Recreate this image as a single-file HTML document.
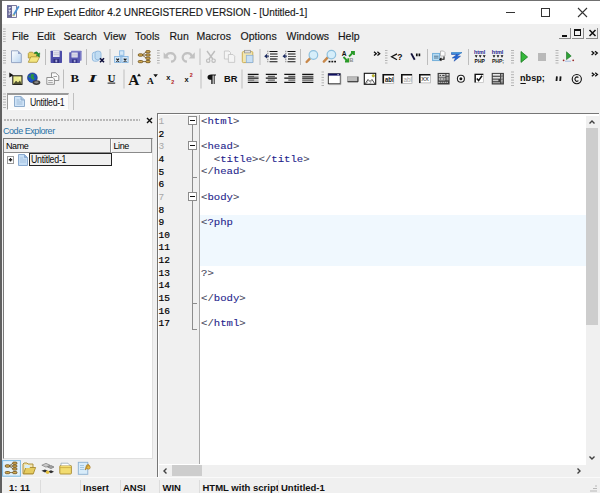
<!DOCTYPE html>
<html><head><meta charset="utf-8">
<style>
*{margin:0;padding:0;box-sizing:border-box}
html,body{width:600px;height:493px;overflow:hidden;background:#f0f0f0;font-family:"Liberation Sans",sans-serif;font-size:11px;color:#000;position:relative}
.a{position:absolute}
svg{position:absolute;overflow:visible}
.t{white-space:nowrap;line-height:12px}
.menu{top:29.5px;font-size:10.5px;color:#161616;-webkit-text-stroke:0.15px #161616}
.grip{width:3px;background:repeating-linear-gradient(to bottom,#b0b0b0 0 1px,transparent 1px 2.6px)}
.sep{width:1px;background:#c4c4c4}
.code{font-family:"Liberation Mono",monospace;font-size:10.65px;color:#24248c;white-space:pre;line-height:12px;transform:scaleY(0.79);transform-origin:0 8.9px;-webkit-text-stroke:0.1px currentColor}
.code b{font-weight:normal;color:#48485c}
.ln{font-family:"Liberation Mono",monospace;font-size:9.5px;font-weight:normal;-webkit-text-stroke:0.2px #000;color:#000;left:158.5px;line-height:12px;margin-top:1.8px}
.ln.g{color:#a8a8a8;font-weight:normal;-webkit-text-stroke:0}
.st{font-size:9.5px;font-weight:bold;top:482px;line-height:12px;white-space:nowrap;color:#111}
</style></head><body>

<!-- ===== TITLE BAR ===== -->
<div class="a" style="left:0;top:0;width:600px;height:24px;background:#fff"></div>
<div class="a" style="left:0;top:0;width:600px;height:1px;background:#707070"></div>
<svg style="left:7px;top:5px" width="13" height="13" viewBox="0 0 13 13">
  <rect x="0.4" y="0.6" width="9.2" height="11.8" fill="#f4f6fc" stroke="#5a5a86" stroke-width="0.8"/>
  <rect x="0.4" y="0.6" width="4.6" height="11.8" fill="#6a6a98"/>
  <path d="M1.6 2.5h2.2M1.6 3.8h1.2M1.6 5.6h2.2M2.7 5.6v1.6M1.6 8.2h2.2M1.6 9.5h1.2" stroke="#e8e8f4" stroke-width="0.9"/>
  <path d="M6.2 10.8 L11.8 1.2" stroke="#4a90d0" stroke-width="1.8"/>
  <path d="M6.2 10.8 L6.8 9.6" stroke="#d0c060" stroke-width="1.8"/>
</svg>
<div class="a t" style="left:24px;top:7px;font-size:10px;color:#1a1a1a;letter-spacing:-0.03px;-webkit-text-stroke:0.15px #1a1a1a">PHP Expert Editor 4.2 UNREGISTERED VERSION - [Untitled-1]</div>
<div class="a" style="left:506px;top:12px;width:8.5px;height:1px;background:#333"></div>
<div class="a" style="left:541px;top:8px;width:9px;height:9px;border:1px solid #333"></div>
<svg style="left:578px;top:8px" width="9" height="9"><path d="M0 0L9 9M9 0L0 9" stroke="#333" stroke-width="1.1"/></svg>

<!-- window left border -->
<div class="a" style="left:0;top:0;width:1.5px;height:493px;background:#606060;z-index:50"></div>

<!-- ===== MENU BAR ===== -->

<div class="a t menu" style="left:12px">File</div>
<div class="a t menu" style="left:37px">Edit</div>
<div class="a t menu" style="left:63.5px">Search</div>
<div class="a t menu" style="left:103.5px">View</div>
<div class="a t menu" style="left:135px">Tools</div>
<div class="a t menu" style="left:169.5px">Run</div>
<div class="a t menu" style="left:196.5px">Macros</div>
<div class="a t menu" style="left:240.5px">Options</div>
<div class="a t menu" style="left:286.5px">Windows</div>
<div class="a t menu" style="left:338px">Help</div>
<!-- MDI buttons -->
<div class="a" style="left:559px;top:28px;width:12px;height:11px;border-right:1px solid #8a8a8a;border-bottom:1px solid #8a8a8a"></div>
<div class="a" style="left:562px;top:35px;width:5px;height:2px;background:#111"></div>
<div class="a" style="left:572px;top:28px;width:12px;height:11px;border-right:1px solid #8a8a8a;border-bottom:1px solid #8a8a8a"></div>
<div class="a" style="left:574px;top:29px;width:7px;height:7px;border:1px solid #111;border-top-width:2px"></div>
<div class="a" style="left:586px;top:28px;width:12px;height:11px;border-right:1px solid #8a8a8a;border-bottom:1px solid #8a8a8a"></div>
<svg style="left:588.5px;top:30px" width="7" height="6"><path d="M0.5 0L6.5 6M6.5 0L0.5 6" stroke="#111" stroke-width="1.5"/></svg>

<!-- ===== TOOLBAR ROW 1 ===== -->
<!--ICONS--><svg style="left:0;top:0;z-index:3" width="600" height="493" viewBox="0 0 600 493">
<defs>
<linearGradient id="gdoc" x1="0" y1="0" x2="1" y2="1"><stop offset="0" stop-color="#ffffff"/><stop offset="1" stop-color="#b8d4f0"/></linearGradient>
</defs>
<g fill="#b4b4b4">
<!-- grips row1 -->
<rect x="3" y="28.5" width="2.7" height="1"/><rect x="3" y="31.0" width="2.7" height="1"/><rect x="3" y="33.5" width="2.7" height="1"/><rect x="3" y="36.0" width="2.7" height="1"/><rect x="3" y="38.5" width="2.7" height="1"/><rect x="3" y="41.0" width="2.7" height="1"/>
<rect x="3" y="50.0" width="3" height="1"/><rect x="3" y="52.5" width="3" height="1"/><rect x="3" y="55.0" width="3" height="1"/><rect x="3" y="57.5" width="3" height="1"/><rect x="3" y="60.0" width="3" height="1"/><rect x="3" y="62.5" width="3" height="1"/>
<rect x="157" y="50.0" width="2.7" height="1"/><rect x="157" y="52.5" width="2.7" height="1"/><rect x="157" y="55.0" width="2.7" height="1"/><rect x="157" y="57.5" width="2.7" height="1"/><rect x="157" y="60.0" width="2.7" height="1"/><rect x="157" y="62.5" width="2.7" height="1"/>
<rect x="385" y="50.0" width="2.5" height="1"/><rect x="385" y="52.5" width="2.5" height="1"/><rect x="385" y="55.0" width="2.5" height="1"/><rect x="385" y="57.5" width="2.5" height="1"/><rect x="385" y="60.0" width="2.5" height="1"/><rect x="385" y="62.5" width="2.5" height="1"/>
<rect x="511" y="50.0" width="3" height="1"/><rect x="511" y="52.5" width="3" height="1"/><rect x="511" y="55.0" width="3" height="1"/><rect x="511" y="57.5" width="3" height="1"/><rect x="511" y="60.0" width="3" height="1"/><rect x="511" y="62.5" width="3" height="1"/>
<rect x="555.5" y="50.0" width="3" height="1"/><rect x="555.5" y="52.5" width="3" height="1"/><rect x="555.5" y="55.0" width="3" height="1"/><rect x="555.5" y="57.5" width="3" height="1"/><rect x="555.5" y="60.0" width="3" height="1"/><rect x="555.5" y="62.5" width="3" height="1"/>
<!-- grips row2 -->
<rect x="3" y="71.5" width="3" height="1"/><rect x="3" y="74.2" width="3" height="1"/><rect x="3" y="76.9" width="3" height="1"/><rect x="3" y="79.6" width="3" height="1"/><rect x="3" y="82.3" width="3" height="1"/><rect x="3" y="85" width="3" height="1"/>
<rect x="321.5" y="71.5" width="2.5" height="1"/><rect x="321.5" y="74.2" width="2.5" height="1"/><rect x="321.5" y="76.9" width="2.5" height="1"/><rect x="321.5" y="79.6" width="2.5" height="1"/><rect x="321.5" y="82.3" width="2.5" height="1"/><rect x="321.5" y="85" width="2.5" height="1"/>
<rect x="511" y="71.5" width="3" height="1"/><rect x="511" y="74.2" width="3" height="1"/><rect x="511" y="76.9" width="3" height="1"/><rect x="511" y="79.6" width="3" height="1"/><rect x="511" y="82.3" width="3" height="1"/><rect x="511" y="85" width="3" height="1"/>
<!-- grip row3 -->
<rect x="3" y="93.5" width="3" height="1"/><rect x="3" y="96.2" width="3" height="1"/><rect x="3" y="98.9" width="3" height="1"/><rect x="3" y="101.6" width="3" height="1"/><rect x="3" y="104.3" width="3" height="1"/><rect x="3" y="107" width="3" height="1"/>
</g>
<g fill="#bdbdbd">
<!-- separators row1 -->
<rect x="45" y="49" width="1" height="16"/><rect x="86" y="49" width="1" height="16"/><rect x="109.5" y="49" width="1" height="16"/><rect x="132" y="49" width="1" height="16"/>
<rect x="199.5" y="48.5" width="1" height="16.5"/><rect x="259.5" y="49" width="1" height="16"/><rect x="300" y="49" width="1" height="16"/><rect x="427" y="49" width="1" height="16"/><rect x="468" y="49" width="1" height="16"/>
<!-- separators row2 -->
<rect x="63" y="69.5" width="1" height="19"/><rect x="123.5" y="69.5" width="1" height="19"/><rect x="200.5" y="69.5" width="1" height="19"/><rect x="241.5" y="69.5" width="1" height="19"/>
</g>

<!-- ===== ROW 1 ICONS ===== -->
<!-- new -->
<path d="M11.5 50.8H18L21.3 54.1V62.6H11.5Z" fill="url(#gdoc)" stroke="#8c9ec0" stroke-width="0.9"/>
<path d="M18 50.8V54.1H21.3Z" fill="#93a3c8"/>
<!-- open -->
<path d="M28.3 53.5L29.5 52.2H32.5L33.5 53.2H36.5V58H28.3Z" fill="#e8d060" stroke="#a89030" stroke-width="0.8"/>
<path d="M28.3 62.3L30.8 56.8H39.6L37 62.3Z" fill="#f4e680" stroke="#a89030" stroke-width="0.8"/>
<path d="M34.5 52.5Q37 50.5 38.6 53.5L39.8 52.8L39.4 57L36.4 55.3L37.5 54.6Q36.6 52.8 34.5 53.8Z" fill="#1f8f2a" stroke="#166a1e" stroke-width="0.4"/>
<!-- save -->
<rect x="50.6" y="50.7" width="11.4" height="12.2" fill="#4c4ca8" rx="0.6"/>
<rect x="53" y="51" width="6.6" height="6" fill="#e4e4ee"/>
<path d="M53.6 52.8H59M53.6 54.6H59" stroke="#b8b8d0" stroke-width="0.7"/>
<rect x="53.6" y="59" width="5.4" height="3.9" fill="#30307e"/>
<rect x="55.4" y="59.7" width="1.8" height="2.6" fill="#a8a8d8"/>
<!-- save all -->
<rect x="71" y="50.7" width="10.6" height="10" fill="#7a7ac4" rx="0.6"/>
<rect x="69.2" y="52.2" width="10.8" height="10.7" fill="#5a5ab2" rx="0.6"/>
<rect x="71.5" y="52.5" width="6.2" height="5" fill="#e4e4f0"/>
<path d="M72 54.2H77.2M72 55.9H77.2" stroke="#b8b8d0" stroke-width="0.7"/>
<rect x="72" y="59.3" width="5.2" height="3.6" fill="#36368a"/>
<rect x="73.8" y="59.9" width="1.7" height="2.4" fill="#a8a8d8"/>
<!-- close -->
<rect x="92.4" y="52.2" width="6.5" height="9" rx="2.2" fill="#d0e6f6" stroke="#8cb6dc" stroke-width="0.9"/>
<rect x="95" y="51.2" width="6" height="8.5" rx="2.2" fill="#c0dcf2" stroke="#8cb6dc" stroke-width="0.9"/>
<path d="M100 58.2L104 62.3M104 58.2L100 62.3" stroke="#0e0e3a" stroke-width="1.6"/>
<!-- close all -->
<path d="M121.7 55.3V56.5M117.7 56.5H125.2" stroke="#8ab8e4" stroke-width="0.9"/>
<rect x="119.6" y="50.8" width="4.3" height="4.5" fill="#d4e8f8" stroke="#86b6e2" stroke-width="0.9"/>
<rect x="114.6" y="56.5" width="6.2" height="6" fill="#d4e8f8" stroke="#86b6e2" stroke-width="0.9"/>
<rect x="121.9" y="56.5" width="6.2" height="6" fill="#d4e8f8" stroke="#86b6e2" stroke-width="0.9"/>
<path d="M116.4 58.6L119 61.6M119 58.6L116.4 61.6M123.8 58.6L126.4 61.6M126.4 58.6L123.8 61.6" stroke="#161616" stroke-width="1.2"/>
<!-- explorer -->
<path d="M142 55L146.5 51.8M142 55H146.5M142 55L146.5 58.2M142.5 61.6H146" fill="none" stroke="#6a5020" stroke-width="0.8"/>
<g fill="#d2aa50" stroke="#6a4c18" stroke-width="0.8">
<rect x="138.2" y="53.8" width="4.6" height="2.4" rx="1.2"/>
<rect x="145.8" y="50.6" width="4.4" height="2.2" rx="1.1"/><rect x="145.8" y="53.9" width="4.4" height="2.2" rx="1.1"/><rect x="145.8" y="57.2" width="4.4" height="2.2" rx="1.1"/>
<rect x="138.2" y="60.5" width="4.6" height="2.2" rx="1.1"/><rect x="145.8" y="60.5" width="4.4" height="2.2" rx="1.1"/>
</g>
<!-- undo / redo gray -->
<path d="M166.2 56.5A4.6 4.2 0 1 1 171 61.6" fill="none" stroke="#c2c2c2" stroke-width="2.3"/>
<path d="M163.6 52.3V58.6H169.6Z" fill="#c2c2c2"/>
<path d="M191.8 56.5A4.6 4.2 0 1 0 187 61.6" fill="none" stroke="#c2c2c2" stroke-width="2.3"/>
<path d="M194.8 52.3V58.6H188.8Z" fill="#c2c2c2"/>
<!-- cut -->
<path d="M207 51L212.8 59M214.8 51L209 59" stroke="#bdbdbd" stroke-width="1.4"/>
<circle cx="208.2" cy="60.7" r="1.7" fill="none" stroke="#bdbdbd" stroke-width="1.2"/>
<circle cx="213.6" cy="60.7" r="1.7" fill="none" stroke="#bdbdbd" stroke-width="1.2"/>
<!-- copy -->
<path d="M224.4 51H229L230.5 52.5V59H224.4Z" fill="#f4f4f4" stroke="#c6c6c6" stroke-width="0.9"/>
<path d="M228.4 54.5H233L234.7 56.2V62.4H228.4Z" fill="#f4f4f4" stroke="#c6c6c6" stroke-width="0.9"/>
<!-- paste -->
<rect x="242.3" y="51.6" width="10.5" height="11" rx="1" fill="#f2e6b0" stroke="#c8a848" stroke-width="0.9"/>
<rect x="244.6" y="50.3" width="5.8" height="2.6" fill="#e0e0e0" stroke="#909090" stroke-width="0.7"/>
<rect x="246.3" y="55.3" width="6.6" height="7.3" fill="#c8e0f6" stroke="#8cb0d8" stroke-width="0.8"/>
<!-- indent -->
<g stroke="#111" stroke-width="1.1">
<path d="M269.5 51.5H277.5M270 54H277.5M270 56.5H277.5M270 59H277.5M269.5 61.8H277.5"/>
</g>
<path d="M270 56.5H277.5M270 59H276" stroke="#555" stroke-width="1.1"/>
<path d="M267.8 50.8V63" stroke="#333" stroke-width="0.7" stroke-dasharray="1 1"/>
<path d="M264.2 56.2L267 53.8V58.6Z" fill="#1a2a60"/><path d="M266.5 56.2H269" stroke="#1a2a60" stroke-width="1"/>
<!-- outdent -->
<g stroke="#111" stroke-width="1.1">
<path d="M287.5 51.5H295.5M288 54H295.5M288 56.5H295.5M288 59H295.5M287.5 61.8H295.5"/>
</g>
<path d="M288 56.5H295.5M288 59H294" stroke="#555" stroke-width="1.1"/>
<path d="M285.8 50.8V63" stroke="#333" stroke-width="0.7" stroke-dasharray="1 1"/>
<path d="M282.5 56.2L285.3 53.8V58.6Z" fill="#1a2a60"/><path d="M284.8 56.2H287" stroke="#1a2a60" stroke-width="1"/>
<!-- find -->
<path d="M306.6 62L310.8 57.6" stroke="#c8884a" stroke-width="2.4" stroke-linecap="round"/>
<circle cx="313.4" cy="55" r="4.3" fill="#d6eefa" stroke="#8ec0de" stroke-width="1.2"/>
<!-- find next -->
<path d="M323.8 61.6L328 57.2" stroke="#c8884a" stroke-width="2.4" stroke-linecap="round"/>
<circle cx="331.4" cy="54.6" r="4.3" fill="#d6eefa" stroke="#8ec0de" stroke-width="1.2"/>
<rect x="328.6" y="60.8" width="1.8" height="1.6" fill="#111"/><rect x="331.4" y="60.8" width="1.8" height="1.6" fill="#111"/><rect x="334.2" y="60.8" width="1.8" height="1.6" fill="#111"/>
<!-- replace -->
<text x="341.8" y="55.8" font-family="Liberation Sans" font-weight="bold" font-size="6.6" fill="#111">A</text>
<text x="349.6" y="62.4" font-family="Liberation Sans" font-weight="bold" font-size="5.4" fill="#8a8a8a">B</text>
<path d="M349 56.5L353.5 52M351 52H354V55" fill="none" stroke="#2a9a2a" stroke-width="1.8"/>
<path d="M343.5 57L347.8 61.3M345 61.5H348.3V58.2" fill="none" stroke="#2a9a2a" stroke-width="1.8"/>
<!-- chevrons -->
<path d="M374 51.8L376.3 53.7L374 55.6M377.4 51.8L379.7 53.7L377.4 55.6" fill="none" stroke="#111" stroke-width="1.3"/>
<!-- <? -->
<path d="M397 53.9L391.6 56.8L397 59.7" fill="none" stroke="#111" stroke-width="1.3"/>
<text x="397.3" y="60.1" font-family="Liberation Sans" font-weight="bold" font-size="8.6" fill="#111">?</text>
<!-- \" -->
<path d="M411.2 53.4L414.7 59.7" stroke="#12123a" stroke-width="1.9"/>
<path d="M416.8 53.5V56.3M419.4 53.5V56.3" stroke="#111" stroke-width="1.7"/>
<!-- doc arrow -->
<rect x="432.6" y="53.4" width="7" height="7.2" fill="#b6dcf4" stroke="#6aaad8" stroke-width="0.9"/>
<path d="M434 56.2H438.5M434 58H438.5" stroke="#40607a" stroke-width="0.8"/>
<path d="M440.5 51H443.5L445 52.5V56H440.5Z" fill="#fafafa" stroke="#a0a0a0" stroke-width="0.7"/>
<path d="M444 56.5V59.3H440M441.4 57.8L439.9 59.3L441.4 60.8" fill="none" stroke="#111" stroke-width="1.1"/>
<!-- zend -->
<path d="M451.5 52.5H462L456.5 56.2H460.5L454 61.2L455.5 58H452.2L457 54.5H451.5Z" fill="#2468d8" stroke="#1040a0" stroke-width="0.5"/>
<path d="M451.5 52.5H462L461 53.5H452Z" fill="#60b8e0"/>
<!-- html php -->
<text x="474" y="54.4" font-family="Liberation Sans" font-size="5.4" font-weight="bold" fill="#20208a" textLength="11.2" lengthAdjust="spacingAndGlyphs">html</text>
<path d="M474.8 55.2H477.6L476.2 57.8ZM478.8 55.2H481.6L480.2 57.8ZM482.8 55.2H485.6L484.2 57.8Z" fill="#111"/>
<text x="474.6" y="62.9" font-family="Liberation Sans" font-size="5.4" font-weight="bold" fill="#111" textLength="10.3" lengthAdjust="spacingAndGlyphs">PHP</text>
<text x="491.8" y="54.4" font-family="Liberation Sans" font-size="5.4" font-weight="bold" fill="#20208a" textLength="11.6" lengthAdjust="spacingAndGlyphs">html</text>
<path d="M492.6 55.2H495.4L494 57.8ZM496.6 55.2H499.4L498 57.8ZM500.6 55.2H503.4L502 57.8Z" fill="#111"/>
<text x="492" y="62.9" font-family="Liberation Sans" font-size="5.4" font-weight="bold" fill="#222" textLength="12" lengthAdjust="spacingAndGlyphs">PHP;</text>
<!-- play / stop -->
<path d="M521 51.5L527.6 57L521 62.4Z" fill="#34b83a" stroke="#1a7a22" stroke-width="0.8"/>
<rect x="538" y="53" width="8" height="8" fill="#b9b9b9"/>
<!-- debug -->
<path d="M566.5 51.8L571.2 56L566.5 59.6Z" fill="#2ea236" stroke="#1a7022" stroke-width="0.6"/>
<circle cx="563.6" cy="60.3" r="0.9" fill="#9a2a2a"/><circle cx="573.2" cy="60.3" r="0.9" fill="#9a2a2a"/>
<path d="M565.5 61.2H571.5" stroke="#4a7ad0" stroke-width="0.9" stroke-dasharray="1 1"/>
<!-- chevrons -->
<path d="M591.6 51.2L593.9 53.1L591.6 55M595 51.2L597.3 53.1L595 55" fill="none" stroke="#111" stroke-width="1.3"/>

<!-- ===== ROW 2 ICONS ===== -->
<!-- image -->
<path d="M9.3 72.4L13.6 75.3L9.3 77.6Z" fill="#111"/>
<rect x="12.8" y="75.8" width="9.2" height="8.6" fill="#ecec90" stroke="#111" stroke-width="1"/>
<path d="M13.3 84L16 80.8L18 82.5L20 80.5L21.6 84Z" fill="#505030"/>
<circle cx="19.5" cy="78" r="1" fill="#f8f8a0"/>
<!-- globe -->
<circle cx="32.4" cy="77.8" r="4.9" fill="#1e50c0" stroke="#102a70" stroke-width="0.6"/>
<path d="M31 74.2Q33 73.6 34.5 75L33.2 76.6L34.8 78.2L33.5 80L31.8 79L30.6 77.2Z" fill="#2a9440"/>
<path d="M28.2 77Q29 75.5 30 75.5L29.8 77.5Z" fill="#2a9440"/>
<ellipse cx="36.4" cy="82.6" rx="3.9" ry="2.3" fill="#3a3a3a"/>
<ellipse cx="36.4" cy="82.3" rx="2.3" ry="1.1" fill="#8a8a8a"/>
<!-- forms -->
<path d="M51.5 72.8H55.5L58.8 75.8V80.5H51.5Z" fill="#fafafa" stroke="#7a7a7a" stroke-width="0.8"/>
<path d="M46.8 77.5H53L54.4 79V84.3H46.8Z" fill="#fafafa" stroke="#7a7a7a" stroke-width="0.8"/>
<path d="M48.2 80.5H52.8M48.2 82.4H52.8M53.5 76.5H57" stroke="#8a8a8a" stroke-width="0.8"/>
<!-- B I U -->
<text x="70.4" y="82.1" font-family="Liberation Serif" font-weight="bold" font-size="10.2" fill="#111" textLength="8.6" lengthAdjust="spacingAndGlyphs">B</text>
<text x="88.6" y="82.1" font-family="Liberation Serif" font-weight="bold" font-style="italic" font-size="10.2" fill="#111" textLength="8" lengthAdjust="spacingAndGlyphs">I</text>
<text x="107.4" y="81.6" font-family="Liberation Serif" font-weight="bold" font-size="9.6" fill="#111" textLength="8" lengthAdjust="spacingAndGlyphs">U</text>
<rect x="107.6" y="82.6" width="7.6" height="1" fill="#111"/>
<!-- A big / A small -->
<text x="128.2" y="84.5" font-family="Liberation Serif" font-weight="bold" font-size="14.8" fill="#111" textLength="11" lengthAdjust="spacingAndGlyphs">A</text>
<path d="M137 76.2L139 73.4L141 76.2Z" fill="#111"/>
<text x="147" y="84" font-family="Liberation Serif" font-weight="bold" font-size="8" fill="#111" textLength="6.8" lengthAdjust="spacingAndGlyphs">A</text>
<path d="M153.3 74.2H157.9L155.6 77.2Z" fill="#111"/>
<!-- x2 -->
<text x="166.2" y="80.2" font-family="Liberation Sans" font-weight="bold" font-size="7.4" fill="#111">x</text>
<text x="171.2" y="83.6" font-family="Liberation Sans" font-weight="bold" font-size="5.4" fill="#b02020">2</text>
<text x="184.6" y="82.2" font-family="Liberation Sans" font-weight="bold" font-size="7.4" fill="#111">x</text>
<text x="189.8" y="77.4" font-family="Liberation Sans" font-weight="bold" font-size="5.4" fill="#b02020">2</text>
<!-- pilcrow -->
<path d="M211.3 74.5H216V75.6H215V84H213.8V75.6H212.6V84H211.3V79.8Q207.5 79.8 207.5 77.2Q207.5 74.5 211.3 74.5Z" fill="#111"/>
<rect x="213.8" y="75.6" width="1.2" height="8.4" fill="#666"/>
<!-- BR -->
<text x="224" y="82.2" font-family="Liberation Sans" font-weight="bold" font-size="9.2" fill="#111" textLength="13.5" lengthAdjust="spacingAndGlyphs">BR</text>
<!-- align icons -->
<g stroke-width="1.2">
<path d="M247.8 74.3H258.6M247.8 78.2H258.6M247.8 82.3H258.6" stroke="#111"/>
<path d="M247.8 76.3H254.5M247.8 80.2H254.5" stroke="#606060"/>
<path d="M254.5 76.3H258.6M254.5 80.2H258.6" stroke="#b0b0b0"/>
<path d="M265.8 74.3H276.9M265.8 78.2H276.9M265.8 82.3H276.9" stroke="#111"/>
<path d="M267.8 76.3H274.9M267.8 80.2H274.9" stroke="#606060"/>
<path d="M284.3 74.3H295.3M284.3 78.2H295.3M284.3 82.3H295.3" stroke="#111"/>
<path d="M288.3 76.3H295.3M288.3 80.2H295.3" stroke="#606060"/>
<path d="M302.2 74.3H313.4M302.2 78.2H313.4M302.2 82.3H313.4" stroke="#111"/>
<path d="M302.2 76.3H313.4M302.2 80.2H313.4" stroke="#606060"/>
</g>
<!-- window -->
<rect x="328.3" y="73.8" width="12" height="10" fill="#fff" stroke="#222" stroke-width="0.9"/>
<rect x="328.3" y="73.6" width="12" height="2" fill="#101060"/>
<rect x="337.5" y="74" width="1.2" height="1.2" fill="#ddd"/>
<path d="M340.8 74.5V84.6H329" stroke="#999" stroke-width="0.8" fill="none"/>
<!-- button -->
<rect x="347.6" y="76.8" width="10" height="4.8" fill="#bcbcbc" stroke="#8a8a8a" stroke-width="0.6"/>
<path d="M347.6 81.8H358V76.6" fill="none" stroke="#222" stroke-width="1"/>
<!-- image frame -->
<rect x="364.3" y="73.3" width="11.4" height="11" fill="#fff" stroke="#111" stroke-width="1.1"/>
<path d="M365 84L368 79.5L370 81.5L372 79.5L375 84" fill="none" stroke="#333" stroke-width="0.9"/>
<path d="M366 84L368 81.5M369.5 84L371.5 81.5" stroke="#777" stroke-width="0.6"/>
<circle cx="373.3" cy="75.8" r="1.2" fill="#d8c020" stroke="#7a8a20" stroke-width="0.5"/>
<!-- textfield black -->
<rect x="382.8" y="74.3" width="11" height="9" fill="#fff" stroke="#aaa" stroke-width="0.7"/>
<path d="M383.3 83.3V74.8H394" fill="none" stroke="#111" stroke-width="1.6"/>
<text x="385" y="82.2" font-family="Liberation Sans" font-weight="bold" font-size="6.6" fill="#111" textLength="8.6" lengthAdjust="spacingAndGlyphs">abl</text>
<!-- textfield gray -->
<rect x="401.3" y="74.3" width="10.7" height="9" fill="#fff" stroke="#aaa" stroke-width="0.7"/>
<path d="M401.8 83.3V74.8H412" fill="none" stroke="#111" stroke-width="1.6"/>
<text x="403.4" y="82.2" font-family="Liberation Sans" font-size="6.6" fill="#a0a0a0" textLength="8.4" lengthAdjust="spacingAndGlyphs">abl</text>
<!-- password -->
<rect x="419.3" y="74.3" width="11" height="8.6" fill="#fff" stroke="#aaa" stroke-width="0.7"/>
<path d="M419.8 82.9V74.8H430.3" fill="none" stroke="#111" stroke-width="1.6"/>
<text x="421.2" y="81" font-family="Liberation Sans" font-size="6.5" fill="#333" textLength="7.6" lengthAdjust="spacingAndGlyphs">xx</text>
<!-- listbox -->
<rect x="437.6" y="72.9" width="12" height="11.6" fill="#3c3c3c"/>
<rect x="438.8" y="74" width="6.6" height="2.8" fill="#d8d8d8"/>
<rect x="438.8" y="77.6" width="6.6" height="2.8" fill="#d8d8d8"/>
<path d="M439.6 75.4H441M442.2 75.4H444.6M439.6 79H441.4M442.6 79H444.6" stroke="#333" stroke-width="1"/>
<rect x="446.4" y="74" width="2.2" height="1.6" fill="#e0e0e0"/><rect x="446.4" y="76.6" width="2.2" height="3.8" fill="#a0a0a0"/>
<path d="M438.6 82.3H448.6" stroke="#d0d0d0" stroke-width="1.2" stroke-dasharray="1.2 0.8"/>
<!-- radio -->
<circle cx="460.9" cy="78.8" r="3.5" fill="#fff" stroke="#222" stroke-width="1.1"/>
<circle cx="460.9" cy="78.8" r="1.5" fill="#111"/>
<!-- checkbox -->
<rect x="474.8" y="74" width="8.5" height="8.6" fill="#fff" stroke="#bbb" stroke-width="0.7"/>
<path d="M475.2 82.6V74.4H483.3" fill="none" stroke="#111" stroke-width="1.4"/>
<path d="M476.8 78.5L478.6 80.6L482 75.8" fill="none" stroke="#111" stroke-width="1.5"/>
<!-- dropdown -->
<rect x="491.7" y="72.9" width="12.2" height="11.6" fill="#3c3c3c"/>
<rect x="492.8" y="73.9" width="7.2" height="1.8" fill="#e8e8e8"/>
<rect x="492.8" y="76.8" width="7.2" height="1.8" fill="#e0e0e0"/>
<rect x="492.8" y="79.6" width="5.6" height="1.6" fill="#c8c8c8"/>
<rect x="492.8" y="82" width="7.2" height="1.4" fill="#9a9a9a"/>
<rect x="500.8" y="73.9" width="2.2" height="9.5" fill="#7a7a7a"/>
<path d="M501 74.4H502.8L501.9 75.6ZM501 77.5H502.8L501.9 78.7ZM501 80.6H502.8L501.9 81.8Z" fill="#f0f0f0"/>
<!-- nbsp; -->
<text x="520" y="81.3" font-family="Liberation Sans" font-weight="bold" font-size="9.2" fill="#111" textLength="24.8" lengthAdjust="spacingAndGlyphs">nbsp;</text>
<rect x="520.4" y="83" width="5.4" height="1" fill="#111"/>
<!-- quote -->
<path d="M556.9 76.4L556.5 81M560.6 76.4L560.2 81" stroke="#151515" stroke-width="1.8"/>
<!-- copyright -->
<circle cx="576.8" cy="79.1" r="4.6" fill="none" stroke="#111" stroke-width="1.1"/>
<path d="M578.4 77.5A2.1 2.1 0 1 0 578.4 80.7" fill="none" stroke="#111" stroke-width="1.1"/>
<!-- chevrons -->
<path d="M591.8 72.8L594 74.5L591.8 76.2M595.2 72.8L597.4 74.5L595.2 76.2" fill="none" stroke="#111" stroke-width="1.3"/>

<!-- ===== BOTTOM PANEL ICONS ===== -->
<rect x="2.6" y="460.6" width="17.8" height="15.6" fill="#e2f1fb" stroke="#7cbbe6" stroke-width="1"/>
<path d="M9 466L13 463.3M9 466H13M9 466L13 468.7M9.5 472.6H13" fill="none" stroke="#6a5020" stroke-width="0.8"/>
<g fill="#d2aa50" stroke="#6a4c18" stroke-width="0.8">
<rect x="5.2" y="464.8" width="4.6" height="2.4" rx="1.2"/>
<rect x="12.6" y="462.1" width="4.4" height="2.2" rx="1.1"/><rect x="12.6" y="465" width="4.4" height="2.2" rx="1.1"/><rect x="12.6" y="467.9" width="4.4" height="2.2" rx="1.1"/>
<rect x="5.2" y="471.5" width="4.6" height="2.2" rx="1.1"/><rect x="12.6" y="471.5" width="4.4" height="2.2" rx="1.1"/>
</g>
<!-- open folder -->
<path d="M23 464L24 463H27L28 464H33V473.8H23Z" fill="#f0e4b0" stroke="#a88a30" stroke-width="0.9"/>
<path d="M23.5 473.8L25.8 467.5H35.6L33.3 473.8Z" fill="#e6cc60" stroke="#a88a30" stroke-width="0.9"/>
<rect x="24.8" y="465" width="5" height="3" fill="#d8eef8"/>
<!-- network -->
<path d="M41.8 465.2L46 463.3L50 465.2L46 467.2Z" fill="#c8c8c8" stroke="#707070" stroke-width="0.6"/>
<path d="M47.5 467L51 465.5L54 467L51 468.6Z" fill="#a8a8a8" stroke="#606060" stroke-width="0.6"/>
<path d="M41.5 470.8L45 469.5L48 471L45 472.6Z" fill="#303030"/>
<path d="M48 471.5L51 470.3L54 471.8L51 473.2Z" fill="#303030"/>
<circle cx="47.6" cy="472.2" r="1.8" fill="#e2c040"/>
<!-- folder closed -->
<rect x="59.8" y="465.5" width="11.6" height="8.5" rx="0.8" fill="#f2dc70" stroke="#a88a30" stroke-width="0.9"/>
<path d="M61 465.5V463.2H68L70 465.5" fill="#fff" stroke="#8aa0b0" stroke-width="0.7"/>
<path d="M59.8 467.6H71.4" stroke="#c8a840" stroke-width="0.8"/>
<!-- doc pin -->
<rect x="78.3" y="462.3" width="9.5" height="12" fill="#d8ecfa" stroke="#8cb0d0" stroke-width="0.9"/>
<path d="M80 465.5H84M80 467.5H84M80 469.5H84" stroke="#9cc0dc" stroke-width="0.8"/>
<path d="M85 470L89.8 466.2L88.4 464.3L86.5 465.2Z" fill="#e0b040" stroke="#9a7020" stroke-width="0.6"/>
<circle cx="88.4" cy="467.4" r="1.8" fill="#e8b840" stroke="#9a7020" stroke-width="0.6"/>
</svg>
<!--/ICONS-->

<!-- ===== TOOLBAR ROW 2 ===== -->


<!-- ===== TAB ROW ===== -->

<div class="a" style="left:7px;top:92.5px;width:62px;height:17px;background:#fbfbfb;border:1px solid #9a9a9a;border-right-color:#e8e8e8;border-bottom-color:#fff;border-top-width:2px"></div>
<svg style="left:14px;top:95.5px" width="11" height="11" viewBox="0 0 11 11">
  <path d="M0.5 0.5H7L10.5 4V10.5H0.5Z" fill="#cfe3f7" stroke="#8eaccc"/>
  <path d="M7 0.5V4H10.5" fill="#a8c4e0" stroke="#8eaccc"/>
  <path d="M2.5 4h3M2.5 6h6M2.5 8h6" stroke="#9fbcd8"/>
</svg>
<div class="a t" style="left:29.8px;top:96.5px;font-size:10px;letter-spacing:-0.35px;color:#111;transform:scaleX(0.875);transform-origin:0 0">Untitled-1</div>
<div class="a" style="left:73px;top:93px;width:1px;height:17px;background:#c0c0c0"></div>

<!-- ===== LEFT PANEL ===== -->
<div class="a" style="left:4px;top:119px;width:136px;height:2px;background:repeating-linear-gradient(to right,#b8b8b8 0 2px,transparent 2px 3px)"></div>
<svg style="left:146.5px;top:117.5px" width="5" height="5"><path d="M0 0L5 5M5 0L0 5" stroke="#111" stroke-width="1.4"/></svg>
<div class="a t" style="left:3px;top:125px;font-size:9px;color:#2a70a6;letter-spacing:-0.45px">Code Explorer</div>
<!-- tree frame -->
<div class="a" style="left:3px;top:137.5px;width:150px;height:321px;background:#fff;border-left:1px solid #7a7a7a;border-top:1px solid #7a7a7a;border-right:1px solid #e0e0e0;border-bottom:1px solid #e0e0e0"></div>
<div class="a" style="left:4px;top:138.5px;width:107px;height:14px;background:#f0f0f0;border-right:1px solid #8a8a8a;border-bottom:1px solid #8a8a8a"></div>
<div class="a" style="left:111px;top:138.5px;width:41px;height:14px;background:#f0f0f0;border-left:1px solid #fff;border-right:1px solid #8a8a8a;border-bottom:1px solid #8a8a8a"></div>
<div class="a t" style="left:6px;top:139.5px;font-size:9px;letter-spacing:-0.4px">Name</div>
<div class="a t" style="left:113.5px;top:139.5px;font-size:9px;letter-spacing:-0.4px">Line</div>
<div class="a" style="left:6.5px;top:156px;width:7px;height:7.5px;border:1px solid #9a9a9a;background:#fff"></div>
<svg style="left:6.5px;top:156px" width="7" height="7.5"><path d="M1.8 3.75H5.2M3.5 2V5.5" stroke="#222" stroke-width="1.3"/></svg>
<svg style="left:18px;top:153.5px" width="10" height="12" viewBox="0 0 10 12">
  <path d="M0.5 0.5H6.5L9.5 3.5V11.5H0.5Z" fill="#c6def5" stroke="#8aaad0"/>
  <path d="M6.5 0.5V3.5H9.5" fill="#90b0d8" stroke="#8aaad0"/>
  <path d="M2 4h3M2 6h6M2 8h6" stroke="#a6c2e0"/>
</svg>
<div class="a" style="left:29px;top:153px;width:82.5px;height:13px;background:#f0f0f0;border:1px solid #222"></div>
<div class="a t" style="left:30.6px;top:154px;font-size:10.4px;letter-spacing:-0.3px;color:#0a0a0a;transform:scaleX(0.85);transform-origin:0 0">Untitled-1</div>

<!-- bottom panel icons -->


<!-- ===== EDITOR ===== -->
<div class="a" style="left:157px;top:113px;width:442px;height:364px;background:#fff;border-top:1.5px solid #767676;border-left:1.5px solid #767676"></div>
<div class="a" style="left:158.5px;top:114.5px;width:41px;height:349px;background:#f0f0f0;border-right:1px solid #a8a8a8"></div>
<div class="a" style="left:200px;top:215.4px;width:386px;height:50.6px;background:#f0f8fe"></div>

<div id="gutter">
<div class="a t ln g" style="top:114.20px">1</div>
<div class="a t ln" style="top:126.85px">2</div>
<div class="a t ln g" style="top:139.50px">3</div>
<div class="a t ln" style="top:152.15px">4</div>
<div class="a t ln" style="top:164.80px">5</div>
<div class="a t ln" style="top:177.45px">6</div>
<div class="a t ln g" style="top:190.10px">7</div>
<div class="a t ln" style="top:202.75px">8</div>
<div class="a t ln" style="top:215.40px">9</div>
<div class="a t ln" style="top:228.05px">10</div>
<div class="a t ln" style="top:240.70px">11</div>
<div class="a t ln" style="top:253.35px">12</div>
<div class="a t ln" style="top:266.00px">13</div>
<div class="a t ln" style="top:278.65px">14</div>
<div class="a t ln" style="top:291.30px">15</div>
<div class="a t ln" style="top:303.95px">16</div>
<div class="a t ln" style="top:316.60px">17</div>
<div class="a" style="left:188px;top:116.00px;width:9px;height:9px;border:1px solid #8c8c8c;background:#fff"></div><div class="a" style="left:190px;top:120.00px;width:5px;height:1.2px;background:#111"></div>
<div class="a" style="left:188px;top:141.30px;width:9px;height:9px;border:1px solid #8c8c8c;background:#fff"></div><div class="a" style="left:190px;top:145.30px;width:5px;height:1.2px;background:#111"></div>
<div class="a" style="left:188px;top:191.90px;width:9px;height:9px;border:1px solid #8c8c8c;background:#fff"></div><div class="a" style="left:190px;top:195.90px;width:5px;height:1.2px;background:#111"></div>
<div class="a" style="left:192px;top:125.00px;width:1px;height:16.30px;background:#8c8c8c"></div>
<div class="a" style="left:192px;top:150.30px;width:1px;height:26.90px;background:#8c8c8c"></div>
<div class="a" style="left:192px;top:176.70px;width:5px;height:1px;background:#8c8c8c"></div>
<div class="a" style="left:192px;top:177.20px;width:1px;height:14.70px;background:#8c8c8c"></div>
<div class="a" style="left:192px;top:200.90px;width:1px;height:128.10px;background:#8c8c8c"></div>
<div class="a" style="left:192px;top:303.20px;width:5px;height:1px;background:#8c8c8c"></div>
<div class="a" style="left:192px;top:328.50px;width:5px;height:1px;background:#8c8c8c"></div>
</div>
<div id="codelines">
<div class="a code" style="left:201px;top:114.70px"><b>&lt;</b>html<b>&gt;</b></div>
<div class="a code" style="left:201px;top:140.00px"><b>&lt;</b>head<b>&gt;</b></div>
<div class="a code" style="left:201px;top:152.65px">  <b>&lt;</b>title<b>&gt;&lt;/</b>title<b>&gt;</b></div>
<div class="a code" style="left:201px;top:165.30px"><b>&lt;/</b>head<b>&gt;</b></div>
<div class="a code" style="left:201px;top:190.60px"><b>&lt;</b>body<b>&gt;</b></div>
<div class="a code" style="left:201px;top:215.90px"><b>&lt;</b>?php</div>
<div class="a code" style="left:201px;top:266.50px"><b>?&gt;</b></div>
<div class="a code" style="left:201px;top:291.80px"><b>&lt;/</b>body<b>&gt;</b></div>
<div class="a code" style="left:201px;top:317.10px"><b>&lt;/</b>html<b>&gt;</b></div>
</div>

<!-- scrollbars -->
<div class="a" style="left:586px;top:115.5px;width:12.5px;height:349px;background:#f0f0f0"></div>
<svg style="left:588.5px;top:119.5px" width="6" height="4"><path d="M0.5 3.5L3 1L5.5 3.5" fill="none" stroke="#404040" stroke-width="1.4"/></svg>
<div class="a" style="left:586px;top:128px;width:11.5px;height:197px;background:#cdcdcd"></div>
<svg style="left:588.5px;top:455.5px" width="6" height="4"><path d="M0.5 0.5L3 3L5.5 0.5" fill="none" stroke="#404040" stroke-width="1.4"/></svg>
<div class="a" style="left:158.5px;top:464.5px;width:440px;height:12.5px;background:#f0f0f0"></div>
<svg style="left:162.5px;top:468px" width="4" height="6"><path d="M3.5 0.5L1 3L3.5 5.5" fill="none" stroke="#404040" stroke-width="1.4"/></svg>
<div class="a" style="left:172px;top:465.3px;width:30px;height:10.5px;background:#cdcdcd"></div>
<svg style="left:576.5px;top:467.5px" width="4" height="6"><path d="M0.5 0.5L3 3L0.5 5.5" fill="none" stroke="#404040" stroke-width="1.4"/></svg>

<!-- ===== STATUS BAR ===== -->
<div class="a" style="left:0;top:477px;width:600px;height:1px;background:#fafafa"></div>
<div class="a sep" style="left:39.5px;top:480px;height:13px;background:#dcdcdc"></div>
<div class="a sep" style="left:79.5px;top:480px;height:13px;background:#dcdcdc"></div>
<div class="a sep" style="left:119.5px;top:480px;height:13px;background:#dcdcdc"></div>
<div class="a sep" style="left:158.5px;top:480px;height:13px;background:#dcdcdc"></div>
<div class="a sep" style="left:198.5px;top:480px;height:13px;background:#dcdcdc"></div>
<div class="a st" style="left:9px">1: 11</div>
<div class="a st" style="left:83px">Insert</div>
<div class="a st" style="left:123px">ANSI</div>
<div class="a st" style="left:162.5px">WIN</div>
<div class="a" style="left:202px;top:478px;width:76px;height:15px;overflow:hidden"><div class="a st" style="left:0.5px;top:4px">HTML with script</div></div>
<div class="a sep" style="left:278px;top:480px;height:13px;background:#dcdcdc"></div>
<div class="a st" style="left:281px">Untitled-1</div>
<svg style="left:589px;top:485px" width="10" height="8"><g fill="#b8b8b8"><rect x="6" y="0.5" width="2" height="1"/><rect x="4" y="3" width="4" height="1"/><rect x="1" y="5.5" width="7" height="1"/></g></svg>
</body></html>
